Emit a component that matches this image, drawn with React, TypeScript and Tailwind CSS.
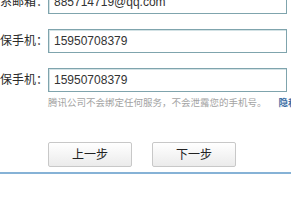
import React from "react";

const rows = [
  { label: "联系邮箱：", value: "885714719@qq.com" },
  { label: "密保手机：", value: "15950708379" },
  { label: "确认密保手机：", value: "15950708379" },
];

export default function App() {
  return (
    <div className="w-[291px] h-[224px] overflow-hidden bg-white text-[#333] font-['Liberation_Sans','Noto_Sans_CJK_SC',sans-serif]">
      <div className="mt-[-10px] flex flex-col gap-[15px]">
        {rows.map((row) => (
          <div key={row.label} className="flex items-center">
            <div className="w-[48px] flex justify-end overflow-hidden">
              <span className="shrink-0 whitespace-nowrap text-[12px] leading-[16px] text-[#2b2b2b]">
                {row.label}
              </span>
            </div>
            <input
              readOnly
              value={row.value}
              className="w-[239px] h-[24px] px-[5px] border border-[#7fa4ad] shadow-[inset_1px_1px_0_#d3e2e5] text-[12px] text-[#333] outline-none font-['Liberation_Sans',sans-serif]"
            />
          </div>
        ))}
      </div>

      <div className="mt-[5px] pl-[48px] whitespace-nowrap text-[9.5px] leading-[12px] text-[#a3a3a3]">
        腾讯公司不会绑定任何服务，不会泄露您的手机号。
        <span className="ml-[12px] font-bold text-[#3d6ea5]">隐私政策</span>
      </div>

      <div className="mt-[33px] pl-[48px] flex gap-[20px]">
        <button className="w-[84px] h-[25px] rounded-[2px] border border-[#c8c8c8] bg-gradient-to-b from-white to-[#ebebeb] text-[12px] text-[#222]">
          上一步
        </button>
        <button className="w-[84px] h-[25px] rounded-[2px] border border-[#c8c8c8] bg-gradient-to-b from-white to-[#ebebeb] text-[12px] text-[#222]">
          下一步
        </button>
      </div>

      <div className="mt-[5px] h-[2px] bg-[#86b2d6]" />
    </div>
  );
}
